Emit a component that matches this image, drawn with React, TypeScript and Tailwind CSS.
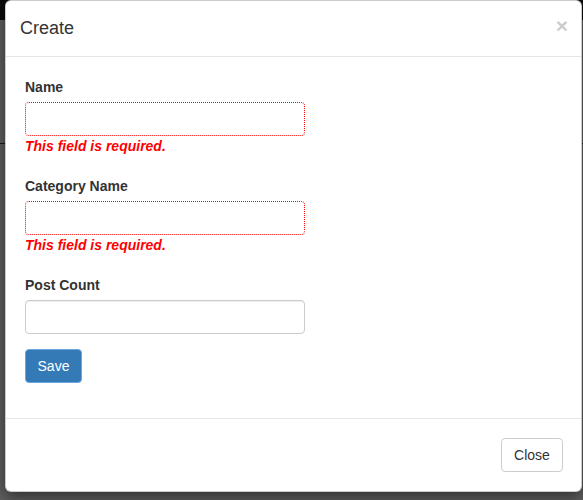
import React from "react";

const font = { fontFamily: '"Liberation Sans", Arial, Helvetica, sans-serif' };

function Field({ label, invalid }: { label: string; invalid?: boolean }) {
  return (
    <div className={invalid ? "mb-5" : "mb-[15px]"}>
      <label className="block text-sm leading-5 font-bold text-[#333] mb-[5px]">{label}</label>
      <input
        type="text"
        className={
          "block w-[280px] h-[34px] rounded-[4px] bg-white px-3 text-sm outline-none " +
          (invalid
            ? "border border-dotted border-[#f00]"
            : "border border-[#ccc] shadow-[inset_0_1px_1px_rgba(0,0,0,0.075)]")
        }
      />
      {invalid && (
        <div className="text-sm leading-5 font-bold italic text-[#f00]">This field is required.</div>
      )}
    </div>
  );
}

export default function App() {
  return (
    <div className="relative h-[500px] w-[583px] overflow-hidden bg-[#5f5f5f]" style={font}>
      {/* page behind the backdrop */}
      <div className="h-5 bg-[#0b0b0b]" />
      <div className="mt-[123px] h-px bg-[#1a1a1a]" />

      {/* modal */}
      <div className="absolute left-[5px] top-0 w-[577px] rounded-[6px] border border-[rgba(0,0,0,0.2)] bg-white shadow-[0_5px_15px_rgba(0,0,0,0.5)]">
        <div className="flex items-center justify-between border-b border-[#e5e5e5] pl-[14px] pr-[13px] pt-[14px] pb-[15px]">
          <h4 className="text-lg leading-[26px] text-[#333]">Create</h4>
          <button className="text-[21px] leading-none font-bold text-black opacity-20 -mt-[5px]">×</button>
        </div>

        <div className="px-[19px] pt-5 pb-[35px]">
          <Field label="Name" invalid />
          <Field label="Category Name" invalid />
          <Field label="Post Count" />
          <button className="h-[34px] w-[57px] rounded-[4px] border border-[#6aa6e0] bg-[#337ab7] text-sm text-white">
            Save
          </button>
        </div>

        <div className="flex justify-end border-t border-[#e5e5e5] px-[18px] py-[19px]">
          <button className="h-[34px] w-[62px] rounded-[4px] border border-[#ccc] bg-white text-sm text-[#333]">
            Close
          </button>
        </div>
      </div>
    </div>
  );
}
